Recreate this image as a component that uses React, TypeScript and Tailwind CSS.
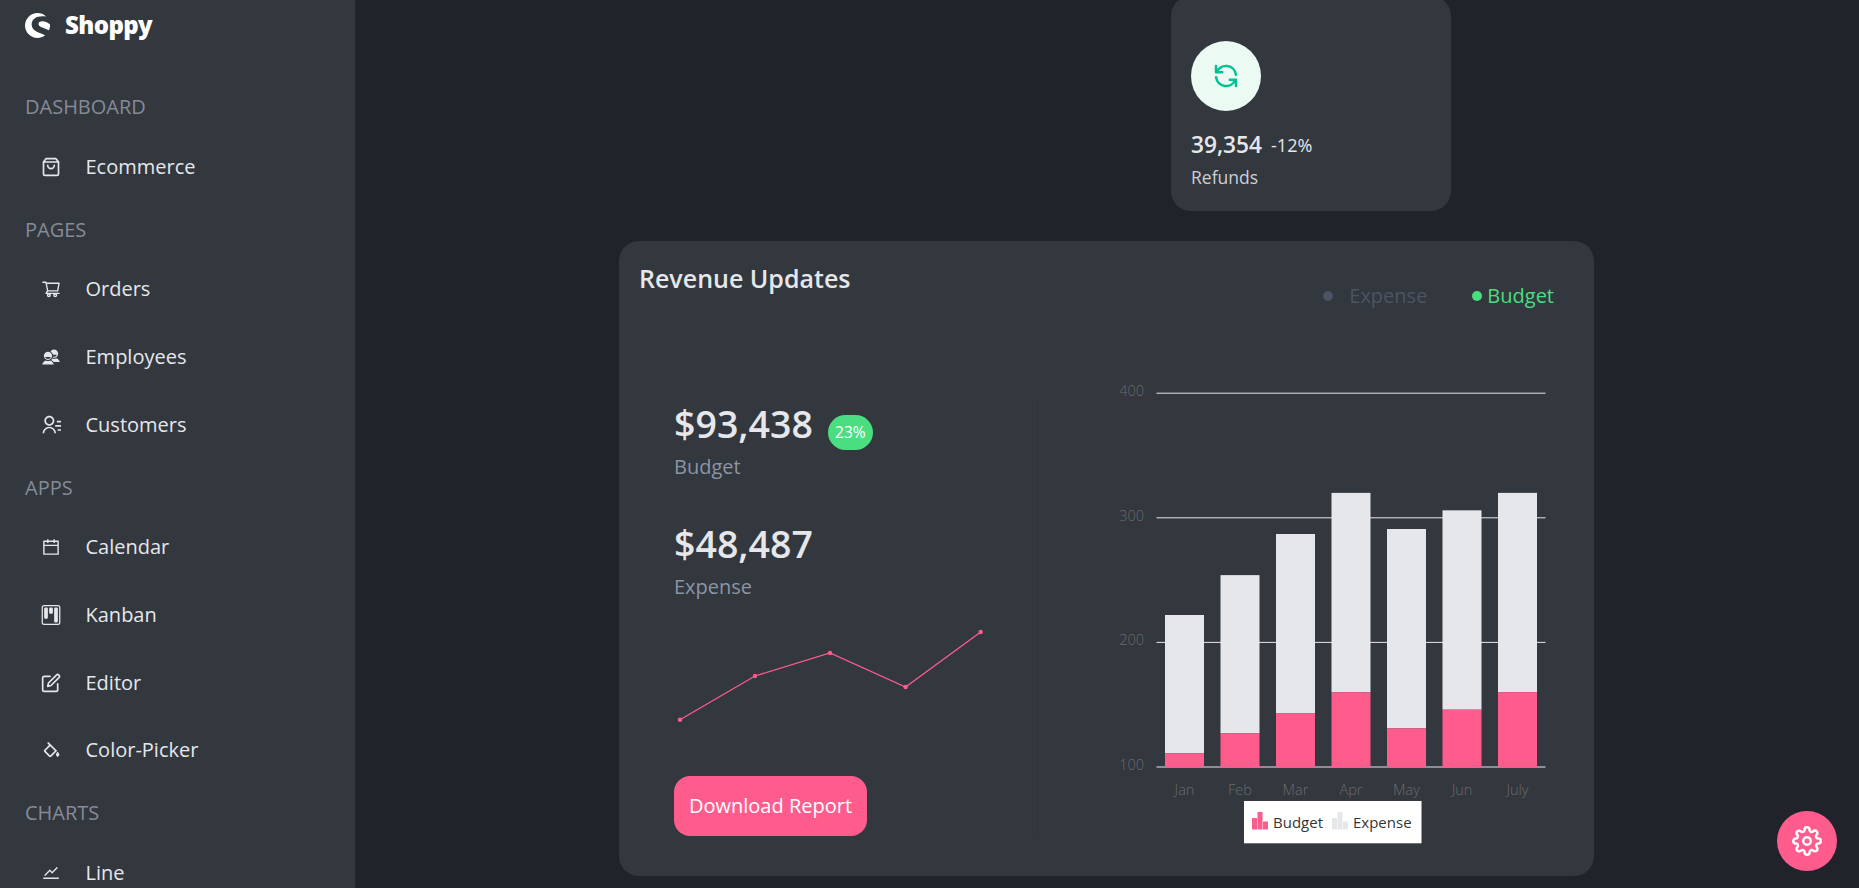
import React from 'react';
import { SiShopware } from 'react-icons/si';
import { FiShoppingBag, FiEdit, FiSettings } from 'react-icons/fi';
import { AiOutlineShoppingCart, AiOutlineCalendar, AiOutlineStock } from 'react-icons/ai';
import { IoMdContacts } from 'react-icons/io';
import { RiContactsLine } from 'react-icons/ri';
import { BsKanban } from 'react-icons/bs';
import { BiColorFill } from 'react-icons/bi';
import { HiOutlineRefresh } from 'react-icons/hi';

const links = [
  { title: 'Dashboard', items: [{ name: 'Ecommerce', icon: <FiShoppingBag size={20} /> }] },
  {
    title: 'Pages',
    items: [
      { name: 'Orders', icon: <AiOutlineShoppingCart size={20} /> },
      { name: 'Employees', icon: <IoMdContacts size={20} /> },
      { name: 'Customers', icon: <RiContactsLine size={20} /> },
    ],
  },
  {
    title: 'Apps',
    items: [
      { name: 'Calendar', icon: <AiOutlineCalendar size={20} /> },
      { name: 'Kanban', icon: <BsKanban size={20} /> },
      { name: 'Editor', icon: <FiEdit size={20} /> },
      { name: 'Color-Picker', icon: <BiColorFill size={20} /> },
    ],
  },
  { title: 'Charts', items: [{ name: 'Line', icon: <AiOutlineStock size={20} /> }] },
];

const months = [
  { label: 'Jan', budget: 111, total: 222 },
  { label: 'Feb', budget: 127, total: 254 },
  { label: 'Mar', budget: 143, total: 287 },
  { label: 'Apr', budget: 160, total: 320 },
  { label: 'May', budget: 131, total: 291 },
  { label: 'Jun', budget: 146, total: 306 },
  { label: 'July', budget: 160, total: 320 },
];

const yFor = (v: number) => 767 - (v - 100) * 1.246;

const sparkPoints = [
  [680, 719.7],
  [755, 676],
  [830, 653],
  [905.6, 687],
  [980.7, 632],
];

const Sidebar: React.FC = () => (
  <aside className="w-[355px] h-screen shrink-0 overflow-hidden bg-[#33373E] pl-[25px]">
    <div className="flex items-center gap-[15px] h-[50px] mb-[45px] text-white">
      <SiShopware size={25} />
      <span className="text-[24px] font-extrabold tracking-tight">Shoppy</span>
    </div>
    {links.map((group) => (
      <div key={group.title}>
        <p className="h-6 mt-[25px] mb-[22px] flex items-center text-[20px] uppercase text-[#858B97]">{group.title}</p>
        <div className="flex flex-col gap-4">
          {group.items.map((item) => (
            <div key={item.name} className="h-[51.67px] flex items-center gap-[24.5px] pl-4 text-[20px] text-[#E5E7EB]">
              {item.icon}
              <span>{item.name}</span>
            </div>
          ))}
        </div>
      </div>
    ))}
  </aside>
);

const RevenueChart: React.FC = () => (
  <svg viewBox="1038 380 556 480" width={556} height={480} className="shrink-0" style={{ fontFamily: '"Open Sans", sans-serif' }}>
    {[400, 300, 200, 100].map((v) => (
      <g key={v}>
        <line x1={1156.5} x2={1545.5} y1={yFor(v)} y2={yFor(v)} stroke="#e5e7eb" strokeWidth={1} />
        <text x={1144} y={yFor(v) + 3} textAnchor="end" fontSize={14.5} fontWeight={300} fill="#6b6b6b">
          {v}
        </text>
      </g>
    ))}
    {months.map((m, i) => {
      const x = 1165 + i * 55.5;
      return (
        <g key={m.label}>
          <rect x={x} y={yFor(m.total)} width={39} height={yFor(m.budget) - yFor(m.total)} fill="#E5E7EB" />
          <rect x={x} y={yFor(m.budget)} width={39} height={767 - yFor(m.budget)} fill="#FF5C8E" />
          <text x={x + 19.5} y={795} textAnchor="middle" fontSize={14.5} fontWeight={300} fill="#6b6b6b">
            {m.label}
          </text>
        </g>
      );
    })}
    <rect x={1244} y={801} width={177.5} height={42.3} fill="#fff" />
    <g fill="#FF5C8E">
      <rect x={1252} y={818} width={5} height={11.5} />
      <rect x={1257.5} y={812} width={5} height={17.5} />
      <rect x={1263} y={821.5} width={5} height={8} />
    </g>
    <text x={1273} y={828} fontSize={15} fill="#353535">Budget</text>
    <g fill="#E5E7EB">
      <rect x={1332} y={818} width={5} height={11.5} />
      <rect x={1337.5} y={812} width={5} height={17.5} />
      <rect x={1343} y={821.5} width={5} height={8} />
    </g>
    <text x={1353} y={828} fontSize={15} fill="#353535">Expense</text>
  </svg>
);

const App: React.FC = () => (
  <div className="flex h-screen overflow-hidden bg-[#20232A] font-['Open_Sans',sans-serif]">
    <Sidebar />
    <main className="flex-1 flex flex-col items-center pr-[1px]">
      <div className="w-[975px] pl-[552px] -mt-[4px]">
        <div className="w-[280px] h-[215px] rounded-[20px] bg-[#33373E] pt-[45px] px-5">
          <div className="w-[70px] h-[70px] rounded-full bg-[#EBFAF2] text-[#00C292] flex items-center justify-center">
            <HiOutlineRefresh size={30} />
          </div>
          <div className="mt-[17px] flex items-center gap-[9px] h-[34px]">
            <span className="text-[22.7px] font-semibold text-[#E5E7EB]">39,354</span>
            <span className="text-[18px] text-[#E5E7EB]">-12%</span>
          </div>
          <p className="mt-[2px] text-[17.5px] text-[#CBD0D6]">Refunds</p>
        </div>
      </div>

      <section className="w-[975px] h-[635px] mt-[30px] rounded-[20px] bg-[#33373E]">
        <div className="flex justify-between pl-5 pr-[40px]">
          <h2 className="mt-[19px] text-[25px] font-semibold text-[#E5E7EB]">Revenue Updates</h2>
          <div className="mt-[41px] flex items-center text-[20px] h-7">
            <span className="w-[10px] h-[10px] rounded-full bg-[#4B5563]" />
            <span className="ml-4 text-[#4B5563]">Expense</span>
            <span className="ml-[45px] w-[10px] h-[10px] rounded-full bg-[#4ADE80]" />
            <span className="ml-[5px] text-[#4ADE80]">Budget</span>
          </div>
        </div>
        <div className="flex mt-[90px] h-[436px]">
          <div className="w-[419px] h-[436px] border-r border-[#2F333A] pl-[55px] pt-[1px] shrink-0">
            <div className="flex items-center h-[46px]">
              <span className="text-[37.5px] font-semibold text-[#E5E7EB]">$93,438</span>
              <span className="ml-[15px] mt-[17px] w-[45px] h-[35px] rounded-full bg-[#4ADE80] text-white text-[15.5px] flex items-center justify-center">23%</span>
            </div>
            <p className="mt-[5px] text-[20px] text-[#8B95A3]">Budget</p>
            <div className="mt-[39px] h-[46px] flex items-center text-[37.5px] font-semibold text-[#E5E7EB]">$48,487</div>
            <p className="mt-[5px] text-[20px] text-[#8B95A3]">Expense</p>
            <svg viewBox="670 620 320 110" width={320} height={110} className="ml-[-4px] mt-[18px] block">
              <polyline points={sparkPoints.map((p) => p.join(',')).join(' ')} fill="none" stroke="#FF5C8E" strokeWidth={1.3} />
              {sparkPoints.map((p) => (
                <circle key={p[0]} cx={p[0]} cy={p[1]} r={2.2} fill="#FF5C8E" />
              ))}
            </svg>
            <button className="mt-[46px] w-[193px] h-[60px] rounded-2xl bg-[#FF5C8E] text-white text-[20px]">Download Report</button>
          </div>
          <div className="-mt-5">
            <RevenueChart />
          </div>
        </div>
      </section>
    </main>
    <button className="fixed right-[22px] bottom-[17px] w-[60px] h-[60px] rounded-full bg-[#FF5C8E] text-white flex items-center justify-center">
      <FiSettings size={30} />
    </button>
  </div>
);

export default App;
